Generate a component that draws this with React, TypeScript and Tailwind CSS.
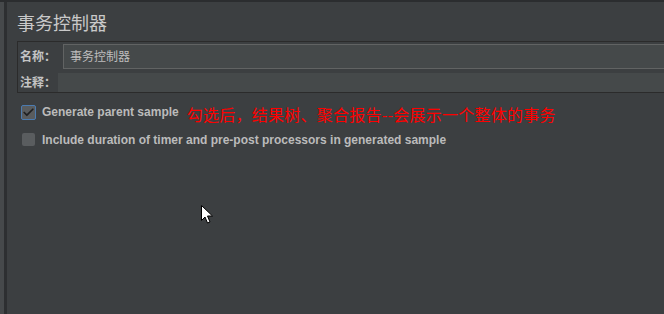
import { Check } from "lucide-react";

const sans = "font-['Liberation_Sans','Noto_Sans_CJK_SC',sans-serif]";

function Cursor() {
  return (
    <svg
      className="absolute left-[201px] top-[203px]"
      width="13"
      height="20"
      viewBox="0 0 13 20"
    >
      <path
        d="M0.5 0.5 L0.5 15.5 L4 12 L6.5 18 L9 17 L6.5 11 L11.5 11 Z"
        fill="#ffffff"
        stroke="#000000"
        strokeWidth="1"
        strokeLinejoin="miter"
      />
    </svg>
  );
}

export default function App() {
  return (
    <div
      className={`relative flex w-[664px] h-[314px] overflow-hidden border-t-2 border-[#2b2d2f] bg-[#3c3f41] ${sans}`}
    >
      <div className="w-[4px] shrink-0 bg-[#46494b]" />
      <div className="w-[3px] shrink-0 bg-[#2d2f31]" />

      <div className="flex-1 pl-[10px] pt-[10px]">
        <h1 className="mb-[5px] text-[18px] leading-[24px] text-[#c9c9c9]">事务控制器</h1>

        <div className="-mr-[10px] border-y border-l border-[#2b2b2b] pt-[2px] pl-[2px]">
          <div className="flex h-[25px] items-center">
            <span className="w-[43px] shrink-0 text-[12px] font-bold text-[#c4c4c4]">名称：</span>
            <div className="flex h-full flex-1 items-center border-y border-l border-[#616363] bg-[#45494a] pl-[6px] text-[12px] text-[#bdbdbd]">
              事务控制器
            </div>
          </div>
          <div className="mt-[4px] flex h-[19px] items-center">
            <span className="w-[38px] shrink-0 text-[12px] font-bold text-[#c4c4c4]">注释：</span>
            <div className="h-full flex-1 bg-[#45494a]" />
          </div>
        </div>

        <div className="mt-[11px] flex h-[16px] items-center pl-[4px]">
          <div className="flex h-[15px] w-[15px] items-center justify-center rounded-[2px] border border-[#4b7bb0] bg-[#595c5e]">
            <Check size={13} strokeWidth={3.2} className="text-[#1f2022]" />
          </div>
          <span className="ml-[6px] text-[12px] font-bold text-[#bbbbbb]">Generate parent sample</span>
          <span className="ml-[8px] mt-[3px] font-['Noto_Sans_CJK_SC',sans-serif] text-[16px] leading-[20px] tracking-[0.25px] text-[#ff0000]">
            勾选后，结果树、聚合报告--会展示一个整体的事务
          </span>
        </div>

        <div className="mt-[13px] flex h-[13px] items-center pl-[5px]">
          <div className="h-[13px] w-[13px] rounded-[2px] bg-[#5a5d5f]" />
          <span className="ml-[7px] text-[12px] font-bold text-[#bbbbbb]">
            Include duration of timer and pre-post processors in generated sample
          </span>
        </div>
      </div>

      <Cursor />
    </div>
  );
}
